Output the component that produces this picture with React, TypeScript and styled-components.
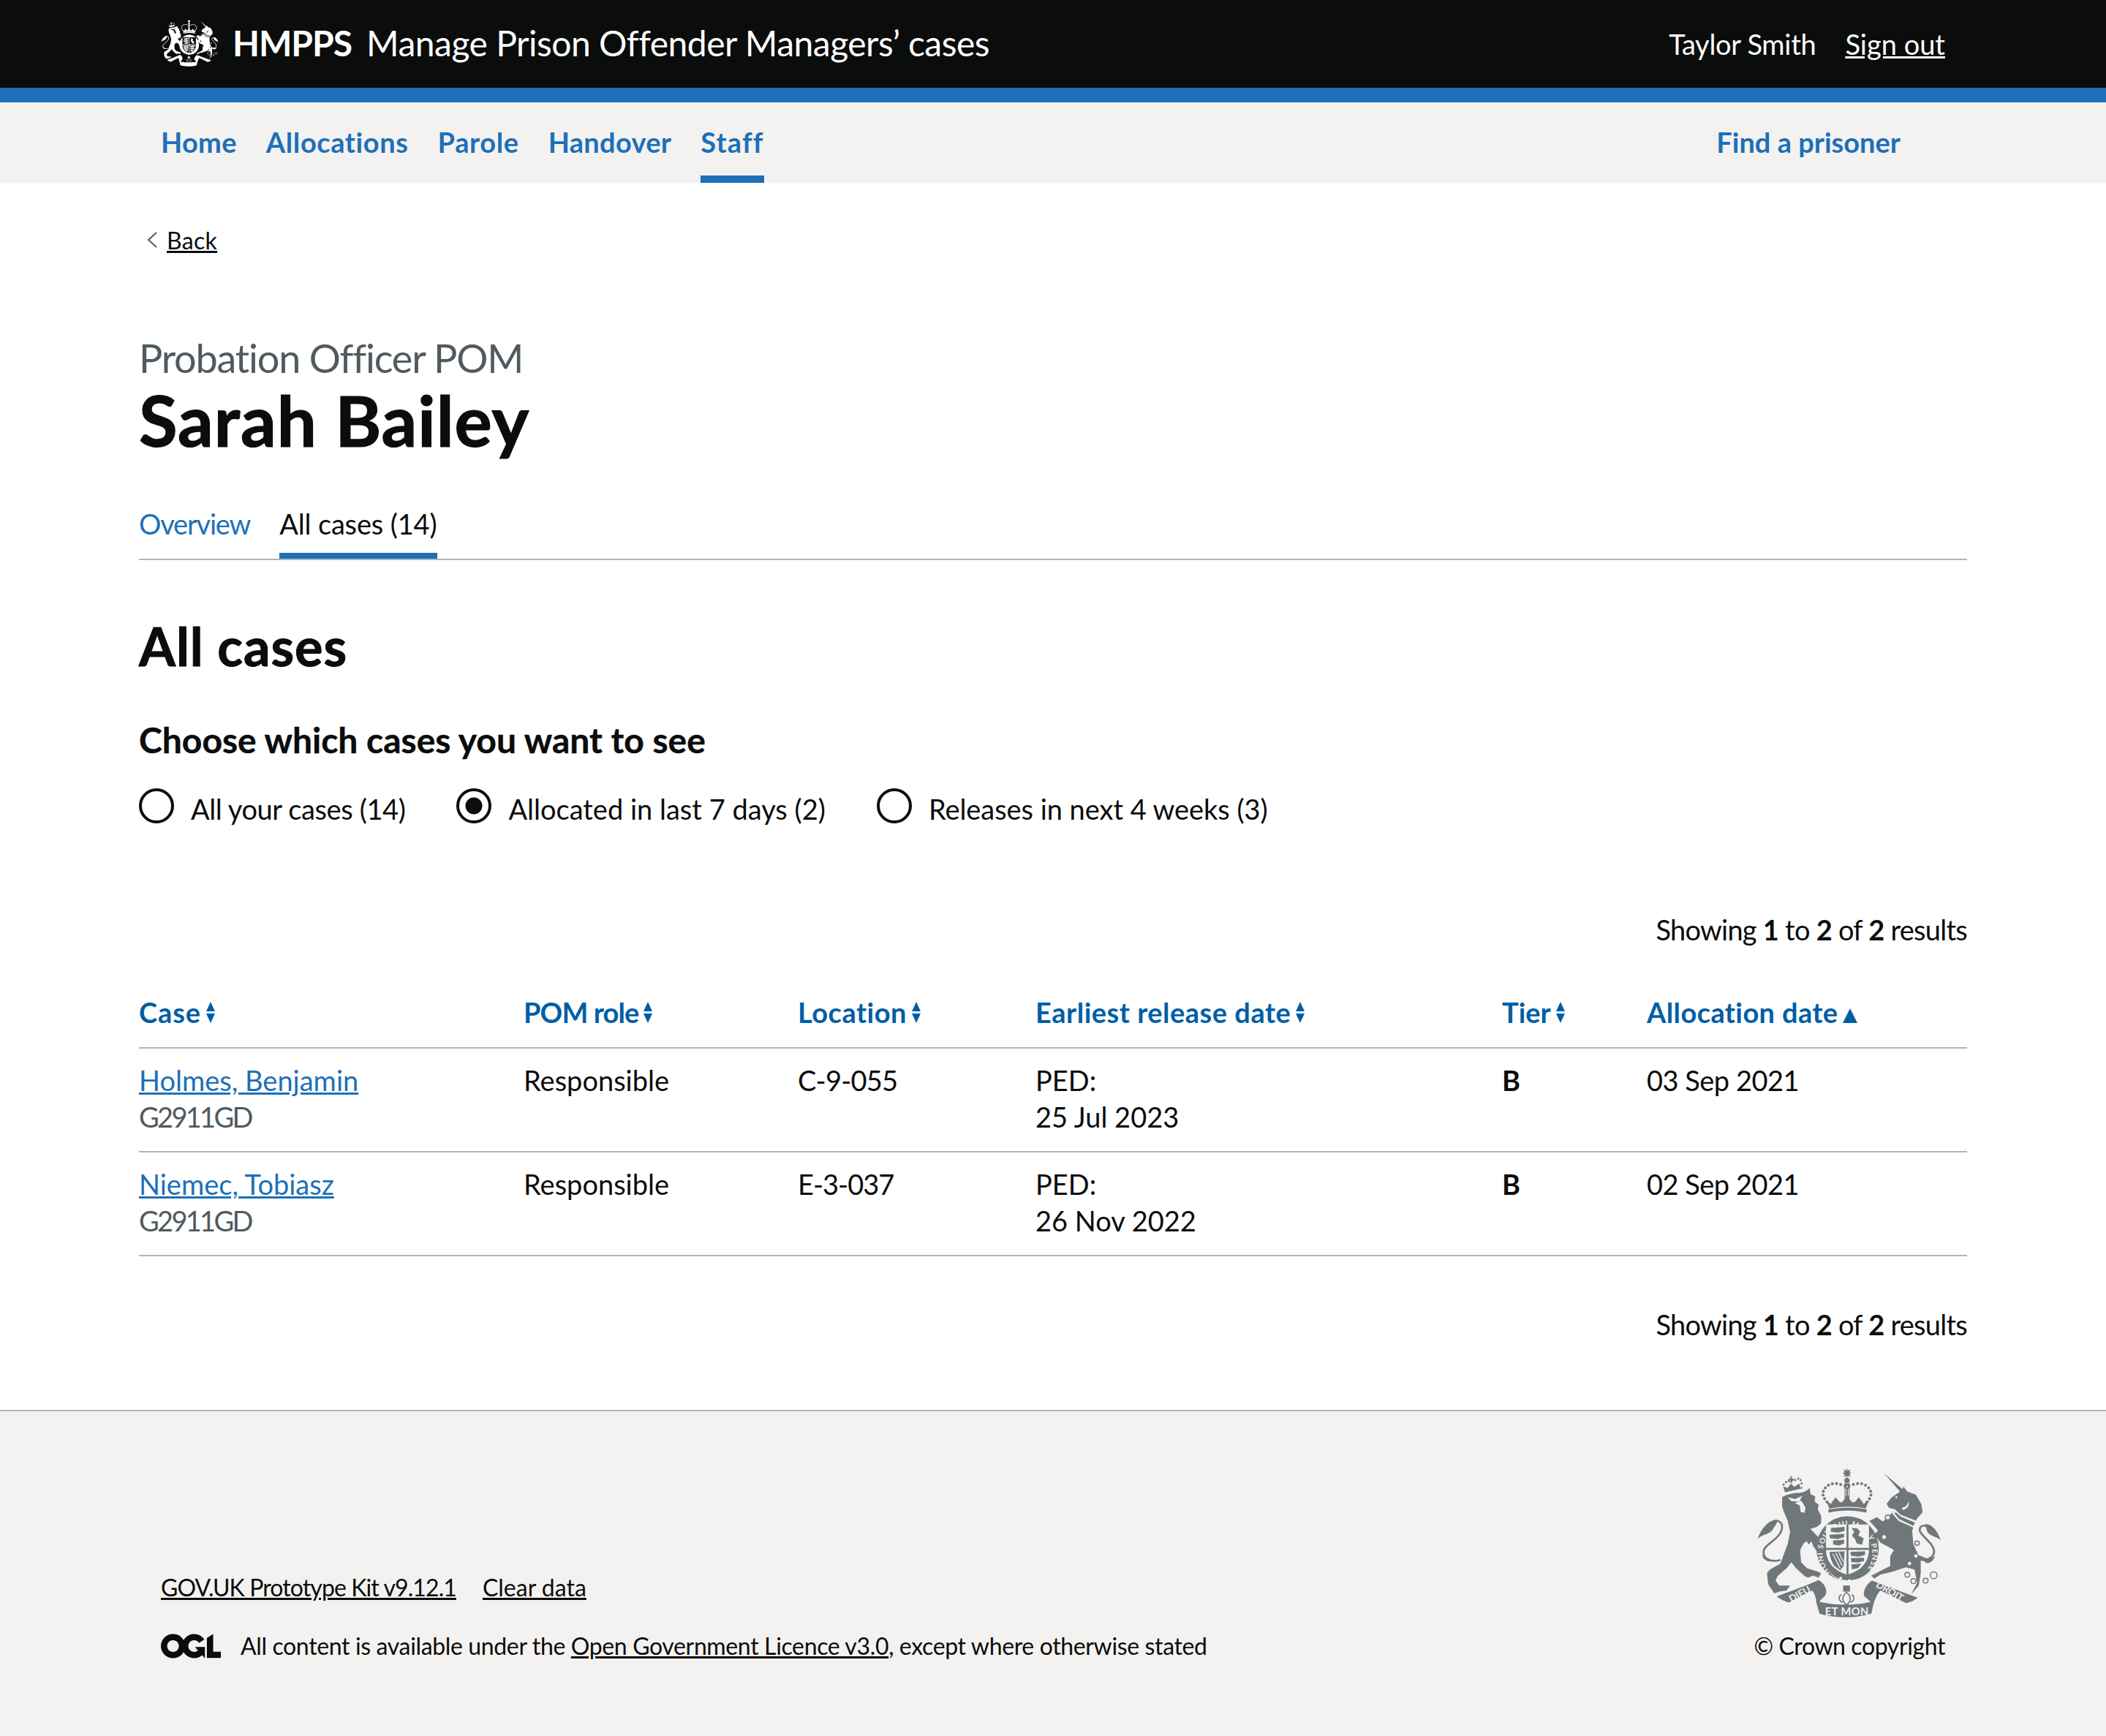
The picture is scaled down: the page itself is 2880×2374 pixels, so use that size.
import React from "react"
import styled, { createGlobalStyle } from "styled-components"

const Global = createGlobalStyle`
  html, body { margin: 0; padding: 0; background: #fff; }
  body { font-family: Lato, "Noto Sans", sans-serif; color: #0b0c0c; }
  a { color: inherit; }
`

const Header = styled.header`
  height: 120px;
  background: #0b0c0c;
  color: #fff;
  border-bottom: 20px solid #1d70b8;
  display: flex;
  align-items: center;
  justify-content: space-between;
  padding: 0 220px;
`
const Brand = styled.div`
  display: flex;
  align-items: center;
  font-size: 48px;
  letter-spacing: -0.5px;
  line-height: 56px;
  padding-bottom: 2px;
`
const BrandName = styled.strong`
  margin: 0 20px 0 19px;
  font-weight: 700;
  letter-spacing: -1px;
`
const UserBox = styled.div`
  display: flex;
  gap: 40px;
  font-size: 38px;
`
const UserName = styled.span`
  letter-spacing: -0.3px;
`
const Nav = styled.nav`
  height: 110px;
  background: #f3f2f1;
  display: flex;
  justify-content: space-between;
  padding: 0 281px 0 220px;
`
const NavList = styled.div`
  display: flex;
  gap: 40px;
`
const NavLink = styled.a<{ $active?: boolean; $ls?: number }>`
  display: flex;
  align-items: center;
  box-sizing: border-box;
  height: 110px;
  padding-bottom: 2px;
  box-shadow: ${(p) => (p.$active ? "inset 0 -10px 0 #1d70b8" : "none")};
  color: #1d70b8;
  font-size: 38px;
  font-weight: 700;
  letter-spacing: ${(p) => p.$ls ?? 0}px;
  text-decoration: none;
`
const Main = styled.main`
  padding: 58px 190px 0;
`
const BackLink = styled.a`
  display: flex;
  align-items: center;
  gap: 12px;
  height: 40px;
  margin-left: 10px;
  font-size: 32px;
  letter-spacing: 0.3px;
`
const Caption = styled.div`
  margin-top: 112px;
  color: #505a5f;
  font-size: 54px;
  line-height: 60px;
  letter-spacing: -1.2px;
`
const Title = styled.h1`
  margin: 4px 0 0;
  font-size: 96px;
  line-height: 100px;
  font-weight: 700;
  letter-spacing: 1px;
  -webkit-text-stroke: 1.2px #0b0c0c;
`
const Tabs = styled.div`
  display: flex;
  gap: 40px;
  margin-top: 67px;
  border-bottom: 2px solid #b1b4b6;
`
const Tab = styled.a<{ $active?: boolean; $ls?: number }>`
  display: block;
  padding-bottom: ${(p) => (p.$active ? "15px" : "23px")};
  border-bottom: ${(p) => (p.$active ? "8px solid #1d70b8" : "0")};
  color: ${(p) => (p.$active ? "#0b0c0c" : "#1d70b8")};
  font-size: 38px;
  line-height: 50px;
  letter-spacing: ${(p) => p.$ls ?? 0}px;
  text-decoration: none;
`
const SectionTitle = styled.h2`
  margin: 77px 0 0;
  font-size: 72px;
  line-height: 80px;
  font-weight: 700;
  letter-spacing: 1px;
  -webkit-text-stroke: 1px #0b0c0c;
`
const FilterTitle = styled.h3`
  margin: 59px 0 0;
  font-size: 48px;
  line-height: 60px;
  font-weight: 700;
  -webkit-text-stroke: 0.4px #0b0c0c;
`
const Radios = styled.div`
  display: flex;
  gap: 70px;
  height: 54px;
  margin-top: 35px;
`
const RadioItem = styled.label<{ $ls?: number }>`
  display: flex;
  align-items: flex-start;
  gap: 23px;
  font-size: 38px;
  line-height: 50px;
  letter-spacing: ${(p) => p.$ls ?? 0}px;
`
const RadioText = styled.span`
  padding-top: 4px;
`
const RadioMark = styled.span<{ $checked?: boolean }>`
  box-sizing: border-box;
  width: 48px;
  height: 48px;
  margin-top: 1px;
  border: 4px solid #0b0c0c;
  border-radius: 50%;
  background: ${(p) => (p.$checked ? "radial-gradient(circle, #0b0c0c 0 11px, transparent 12px)" : "transparent")};
`
const Results = styled.p<{ $top: number }>`
  margin: ${(p) => p.$top}px 0 0;
  text-align: right;
  font-size: 38px;
  line-height: 50px;
  letter-spacing: -0.75px;
  b { font-weight: 700; }
`
const Table = styled.table`
  width: 100%;
  margin-top: 63px;
  table-layout: fixed;
  border-collapse: collapse;
  font-size: 38px;
  line-height: 50px;
`
const Th = styled.th<{ $w: number; $ls: number }>`
  width: ${(p) => p.$w}px;
  padding: 0 0 23px;
  border-bottom: 2px solid #b1b4b6;
  color: #005ea5;
  font-weight: 700;
  text-align: left;
  letter-spacing: ${(p) => p.$ls}px;
`
const Td = styled.td<{ $ls?: number }>`
  padding: 18px 0 22px;
  border-bottom: 2px solid #b1b4b6;
  vertical-align: top;
  letter-spacing: ${(p) => p.$ls ?? 0}px;
`
const CaseLink = styled.a`
  display: block;
  color: #1d70b8;
`
const Muted = styled.span`
  color: #505a5f;
  letter-spacing: -2.7px;
`
const SortIcon = styled.svg<{ $drop: number }>`
  margin-left: 6px;
  vertical-align: ${(p) => p.$drop}px;
`
const Footer = styled.footer`
  box-sizing: border-box;
  height: 446px;
  margin-top: 92px;
  padding: 76px 220px 103px;
  border-top: 2px solid #b1b4b6;
  background: #f3f2f1;
  display: flex;
  align-items: flex-end;
  justify-content: space-between;
  font-size: 32px;
  line-height: 40px;
`
const FooterLinks = styled.div`
  display: flex;
  gap: 36px;
  margin-bottom: 40px;
`
const KitLink = styled.a`
  letter-spacing: -0.9px;
`
const Licence = styled.div`
  display: flex;
  align-items: center;
  gap: 27px;
  letter-spacing: -0.36px;
`
const Copyright = styled.div`
  display: flex;
  flex-direction: column;
  align-items: center;
  gap: 19px;
  letter-spacing: -0.4px;
`

// royal arms, drawn on the 3x crop of the footer crest
const Crest = ({ width, ink, paper, id, plain }: { width: number; ink: string; paper: string; id: string; plain?: boolean }) => {
  const crownDots = [[370, 84], [352, 76], [335, 72], [318, 73], [302, 79], [289, 90], [281, 104], [280, 119], [286, 134], [296, 148], [386, 84], [404, 76], [421, 72], [438, 73], [454, 79], [467, 90], [475, 104], [476, 119], [470, 134], [460, 148]]
  const lionCrownDots = [[118, 76], [128, 66], [140, 62], [152, 60], [165, 58], [178, 52], [188, 58], [192, 72]]
  const rings = [[545, 211, 10], [530, 291, 10], [665, 316, 9], [625, 446, 10], [650, 472, 10], [700, 470, 10], [733, 448, 14]]
  const spots = [[660, 369], [634, 400]]
  return (
    <svg width={width} viewBox="10 10 755 612" fill={ink} aria-hidden="true">
      {/* lion */}
      <path d="M112 128 C130 115 160 110 185 110 C205 108 215 100 225 90 L228 115 L248 125 L245 145 L262 160 L258 178 L272 205 L272 235 L255 250 L228 258 L280 312 L285 335 L300 345 L290 365 L255 350 L240 330 L232 308 L222 322 L212 308 L200 318 L186 345 L190 395 L215 420 L255 432 L272 440 L262 458 L240 450 L218 458 L205 452 L170 420 L150 395 L130 420 L95 450 L85 470 L100 490 L145 490 L130 510 L100 515 L80 522 L55 485 L50 440 L62 425 L105 400 L120 360 L135 320 L145 270 L135 225 L120 190 L112 165 Z" />
      <path d="M135 128 L165 136 L195 122 L182 146 L150 144 Z" fill={paper} />
      <path d="M165 152 L190 142 L208 170 L204 192 L188 188 L184 162 Z" fill={paper} />
      <path d="M105 385 C70 395 35 385 36 350 C38 320 108 300 112 252 C113 232 98 222 82 226" fill="none" stroke={ink} strokeWidth="8" />
      <path d="M92 220 C55 222 28 255 12 298 C35 278 62 282 76 258 C82 245 95 235 92 220 Z" />
      <path d="M60 380 C45 378 35 370 28 362 C32 375 42 390 62 392 Z" />
      {/* lion crown */}
      <path d="M124 108 L116 84 L135 90 L148 72 L162 86 L182 72 L188 90 L194 84 L196 92 Z" />
      <path d="M142 52 H146 V42 H152 V52 H160 V58 H152 V70 H146 V58 H138 V52 Z" />
      {lionCrownDots.map(([cx, cy]) => <circle key={`l${cx}`} cx={cx} cy={cy} r="4.5" />)}
      {/* royal crown */}
      <path d="M292 140 L312 156 L318 146 L332 128 L346 146 L356 150 L366 138 L378 116 L390 138 L400 150 L412 146 L426 128 L440 146 L446 156 L468 140 L454 176 C420 164 340 164 306 176 Z" />
      <path d="M368 88 H388 V132 H368 Z" />
      <path d="M373 94 V122 M383 94 V122" stroke={paper} strokeWidth="3" />
      <path d="M364 14 L376 20 L376 12 H380 V20 L392 14 L388 26 L396 30 L388 34 L392 46 L380 40 V48 H376 V40 L364 46 L368 34 L360 30 L368 26 Z" />
      <circle cx="378" cy="60" r="11" />
      <path d="M366 72 H390 V82 H366 Z" />
      {crownDots.map(([cx, cy]) => <circle key={`c${cx}${cy}`} cx={cx} cy={cy} r="6" />)}
      <path d="M300 180 C340 168 420 168 460 180 L456 192 C420 180 340 180 304 192 Z" />
      {/* garter and shield */}
      <ellipse cx="380" cy="338" rx="128" ry="132" />
      {!plain && (
        <>
          <path id={`${id}-garter`} d="M310 436 A102 110 0 1 1 450 436" fill="none" />
          <text fill={paper} fontFamily="Lato, sans-serif" fontWeight="700" fontSize="30">
            <textPath href={`#${id}-garter`} textLength="490" lengthAdjust="spacing">HONI SOIT QUI MAL Y PENSE</textPath>
          </text>
        </>
      )}
      <path d="M292 240 H468 V340 C468 400 430 430 380 446 C330 430 292 400 292 340 Z" fill={paper} />
      <path d="M376 240 H384 V446 H376 Z M292 336 H468 V344 H292 Z" />
      <path d="M312 254 L368 250 V266 L342 274 L312 270 Z M306 282 L366 278 V292 L340 300 L308 296 Z M320 306 L366 302 V318 L345 326 L322 322 Z" />
      <path d="M396 254 L420 256 L432 270 L424 284 L446 296 L440 322 L418 318 L410 298 L398 286 L408 270 Z" />
      <path d="M392 352 L452 350 V364 L426 372 L394 368 Z M394 378 L448 376 V390 L424 396 L396 394 Z M396 404 L436 400 L424 418 L398 424 Z" />
      <path d="M306 352 L368 350 L364 410 L350 428 L326 410 C314 392 308 372 306 352 Z" />
      <path d="M320 360 L350 420 M332 356 L358 408 M344 354 L362 392" stroke={paper} strokeWidth="4" fill="none" />
      <path d="M310 440 C330 462 372 478 420 466" fill="none" stroke={paper} strokeWidth="3" />
      <circle cx="352" cy="460" r="6" fill={paper} />
      <circle cx="388" cy="470" r="6" fill={paper} />
      {/* unicorn */}
      <path d="M530 30 L605 95 L610 85 L625 105 L660 118 L682 155 L688 190 L665 215 L650 250 L645 268 L650 320 L670 365 L720 385 L705 395 L680 385 L680 440 L672 490 L640 527 L665 480 L655 425 L620 415 L560 435 L515 445 L490 462 L478 450 L515 430 L555 410 L555 370 L570 345 L545 330 L515 315 L490 280 L505 265 L470 225 L500 210 L525 228 L560 195 L575 178 L550 172 L540 155 L560 130 L595 105 Z" />
      <circle cx="580" cy="128" r="4" fill={paper} />
      <path d="M603 172 C618 170 628 158 630 145 C636 160 625 178 606 180 Z" fill={paper} />
      <path d="M563 194 L574 178 L598 200 L664 226 L654 254 L590 226 Z" fill={paper} />
      <path d="M572 194 L578 190 L598 208 L656 232 L650 246 L592 218 Z" />
      {rings.map(([cx, cy, r]) => <circle key={`r${cx}`} cx={cx} cy={cy} r={r} fill={paper} stroke={ink} strokeWidth="4.5" />)}
      {spots.map(([cx, cy]) => <circle key={`s${cx}`} cx={cx} cy={cy} r="7" fill={paper} />)}
      <path d="M680 385 C730 385 750 358 722 320 C692 285 665 270 680 250 C692 238 708 248 715 258" fill="none" stroke={ink} strokeWidth="8" />
      <path d="M698 238 C728 238 750 270 762 304 C742 288 718 290 706 268 Z" />
      <path d="M700 378 C715 382 728 378 738 368 C735 385 722 400 700 398 Z" />
      {/* motto */}
      <path d="M90 535 C130 520 240 480 260 468 C285 478 300 510 290 530 L255 565 C250 540 245 520 235 510 L140 560 C120 555 105 545 90 535 Z" />
      <path d="M668 540 L480 470 C455 485 440 520 450 535 L485 565 C495 545 500 525 515 510 L620 562 C640 558 655 550 668 540 Z" />
      <path d="M250 550 C300 574 450 574 490 550 L478 605 C420 625 320 625 265 605 Z" />
      <path d="M362 490 H390 V515 H362 Z" />
      <path d="M376 518 C358 532 354 552 376 570 C398 552 394 532 376 518 Z M356 528 C340 530 344 556 360 558 M396 528 C412 530 408 556 392 558" fill="none" stroke={ink} strokeWidth="5" />
      {!plain && (
        <>
          <text x="288" y="612" fill={paper} fontFamily="Lato, sans-serif" fontWeight="700" fontSize="44" textLength="178">ET MON</text>
          <path id={`${id}-left`} d="M150 560 L258 500" fill="none" />
          <path id={`${id}-right`} d="M494 494 L610 562" fill="none" />
          <text fill={paper} fontFamily="Lato, sans-serif" fontWeight="700" fontSize="40"><textPath href={`#${id}-left`}>DIEU</textPath></text>
          <text fill={paper} fontFamily="Lato, sans-serif" fontWeight="700" fontSize="40"><textPath href={`#${id}-right`}>DROIT</textPath></text>
        </>
      )}
    </svg>
  )
}

const Sort = ({ dir }: { dir?: "asc" }) =>
  dir === "asc" ? (
    <SortIcon $drop={0} width="20" height="20" viewBox="0 0 20 20" fill="#005ea5"><path d="M10 0 L20 20 H0 Z" /></SortIcon>
  ) : (
    <SortIcon $drop={-1} width="14" height="30" viewBox="0 0 14 30" fill="#005ea5"><path d="M7 0 L13 13 H1 Z M1 16 H13 L7 29 Z" /></SortIcon>
  )

const rows = [
  { name: "Holmes, Benjamin", loc: "C-9-055", locLs: -0.8, date: "25 Jul 2023", alloc: "03 Sep 2021" },
  { name: "Niemec, Tobiasz", loc: "E-3-037", locLs: -1, date: "26 Nov 2022", alloc: "02 Sep 2021" },
]
const cols = [
  { label: "Case", w: 526, ls: 0.9 },
  { label: "POM role", w: 375, ls: -0.9 },
  { label: "Location", w: 325, ls: 0.5 },
  { label: "Earliest release date", w: 638, ls: 0.5 },
  { label: "Tier", w: 198, ls: 0 },
  { label: "Allocation date", w: 438, ls: 0.4, dir: "asc" as const },
]

export default function App() {
  return (
    <>
      <Global />
      <Header>
        <Brand>
          <Crest width={79} ink="#fff" paper="#0b0c0c" id="top" plain />
          <BrandName>HMPPS</BrandName>
          <span>Manage Prison Offender Managers’ cases</span>
        </Brand>
        <UserBox>
          <UserName>Taylor Smith</UserName>
          <a href="#signout">Sign out</a>
        </UserBox>
      </Header>
      <Nav>
        <NavList>
          <NavLink href="#home" $ls={0.3}>Home</NavLink>
          <NavLink href="#allocations" $ls={0.6}>Allocations</NavLink>
          <NavLink href="#parole" $ls={0.6}>Parole</NavLink>
          <NavLink href="#handover" $ls={0.3}>Handover</NavLink>
          <NavLink href="#staff" $active $ls={1.2}>Staff</NavLink>
        </NavList>
        <NavLink href="#find">Find a prisoner</NavLink>
      </Nav>
      <Main>
        <BackLink href="#back">
          <svg width="16" height="24" viewBox="0 0 16 24" fill="none" stroke="#505a5f" strokeWidth="2"><path d="M14 2 L3 12 L14 22" /></svg>
          Back
        </BackLink>
        <Caption>Probation Officer POM</Caption>
        <Title>Sarah Bailey</Title>
        <Tabs>
          <Tab href="#overview" $ls={-1.2}>Overview</Tab>
          <Tab href="#all" $active $ls={-0.15}>All cases (14)</Tab>
        </Tabs>
        <SectionTitle>All cases</SectionTitle>
        <FilterTitle>Choose which cases you want to see</FilterTitle>
        <Radios>
          <RadioItem $ls={-0.4}><RadioMark /><RadioText>All your cases (14)</RadioText></RadioItem>
          <RadioItem><RadioMark $checked /><RadioText>Allocated in last 7 days (2)</RadioText></RadioItem>
          <RadioItem $ls={-0.05}><RadioMark /><RadioText>Releases in next 4 weeks (3)</RadioText></RadioItem>
        </Radios>
        <Results $top={115}>Showing <b>1</b> to <b>2</b> of <b>2</b> results</Results>
        <Table>
          <thead>
            <tr>
              {cols.map((c) => (
                <Th key={c.label} $w={c.w} $ls={c.ls}>{c.label}<Sort dir={c.dir} /></Th>
              ))}
            </tr>
          </thead>
          <tbody>
            {rows.map((r) => (
              <tr key={r.name}>
                <Td>
                  <CaseLink href="#case">{r.name}</CaseLink>
                  <Muted>G2911GD</Muted>
                </Td>
                <Td>Responsible</Td>
                <Td $ls={r.locLs}>{r.loc}</Td>
                <Td>PED:<br />{r.date}</Td>
                <Td><b>B</b></Td>
                <Td $ls={-0.5}>{r.alloc}</Td>
              </tr>
            ))}
          </tbody>
        </Table>
        <Results $top={68}>Showing <b>1</b> to <b>2</b> of <b>2</b> results</Results>
      </Main>
      <Footer>
        <div>
          <FooterLinks>
            <KitLink href="#kit">GOV.UK Prototype Kit v9.12.1</KitLink>
            <a href="#clear">Clear data</a>
          </FooterLinks>
          <Licence>
            <svg width="82" height="34" viewBox="0 0 483.2 195.7" fill="#0b0c0c">
              <path d="M421.5 142.8V.1l-50.7 32.3v161.1h112.4v-50.7zm-122.3-9.6A47.12 47.12 0 0 1 221 97.8c0-26 21.1-47.1 47.1-47.1 16.7 0 31.4 8.7 39.7 21.8l42.7-27.2A97.63 97.63 0 0 0 268.1 0c-36.5 0-68.3 20.1-85.1 49.7A98 98 0 0 0 97.8 0C43.9 0 0 43.9 0 97.8s43.9 97.8 97.8 97.8c36.5 0 68.3-20.1 85.1-49.7a97.76 97.76 0 0 0 149.6 25.4l19.4 22.2h3v-87.8h-80l24.3 27.5zM97.8 145c-26 0-47.1-21.1-47.1-47.1s21.1-47.1 47.1-47.1 47.2 21 47.2 47S123.8 145 97.8 145" />
            </svg>
            <span>All content is available under the <a href="#ogl">Open Government Licence v3.0</a>, except where otherwise stated</span>
          </Licence>
        </div>
        <Copyright>
          <Crest width={252} ink="#6f777b" paper="#f3f2f1" id="foot" />
          <span>© Crown copyright</span>
        </Copyright>
      </Footer>
    </>
  )
}
